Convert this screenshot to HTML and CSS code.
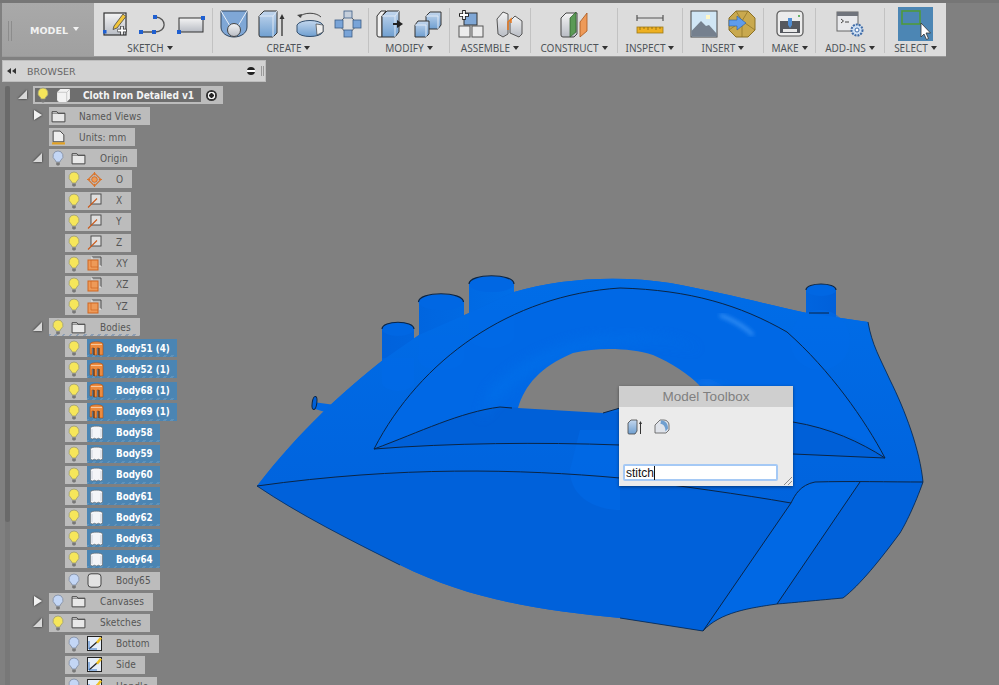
FILE: index.html
```html
<!DOCTYPE html>
<html lang="en">
<head>
<meta charset="utf-8">
<title>Cloth Iron Detailed v1</title>
<link rel="stylesheet" href="styles.css">
</head>
<body>
<svg class="defs" width="0" height="0">
  <defs>
    <linearGradient id="gBlue" x1="0" y1="0" x2="0" y2="1"><stop offset="0" stop-color="#c3d7ee"/><stop offset="1" stop-color="#6f9fd0"/></linearGradient>
    <linearGradient id="gGrey" x1="0" y1="0" x2="0" y2="1"><stop offset="0" stop-color="#f4f4f4"/><stop offset="1" stop-color="#b8bcc4"/></linearGradient>
    <linearGradient id="gCyl" x1="0" y1="0" x2="1" y2="0"><stop offset="0" stop-color="#0062dc"/><stop offset=".35" stop-color="#0070ea"/><stop offset=".6" stop-color="#0066e2"/><stop offset=".8" stop-color="#006eea"/><stop offset="1" stop-color="#0060da"/></linearGradient>
    <linearGradient id="gTop" x1="0" y1="0" x2="0" y2="1"><stop offset="0" stop-color="#006de8"/><stop offset="1" stop-color="#0063dd"/></linearGradient>
    <filter id="blur2"><feGaussianBlur stdDeviation="2"/></filter>
    <filter id="blur6"><feGaussianBlur stdDeviation="6"/></filter>
    <symbol id="bulb-on" viewBox="0 0 12 16"><path d="M6 1a5 5 0 0 0-3 9c.7.6 1 1.3 1 2h4c0-.7.3-1.400 1-2a5 5 0 0 0-3-9z" fill="#f6e65a" stroke="#9a9a78" stroke-width=".8"/><path d="M4.200 12.500h3.600v2.200l-1 .8H5.200l-1-.8z" fill="#777"/></symbol>
    <symbol id="bulb-off" viewBox="0 0 12 16"><path d="M6 1a5 5 0 0 0-3 9c.7.6 1 1.300 1 2h4c0-.7.3-1.400 1-2a5 5 0 0 0-3-9z" fill="#c3d6f5" stroke="#7f8aa0" stroke-width=".8"/><path d="M4.200 12.500h3.600v2.200l-1 .8H5.200l-1-.8z" fill="#777"/></symbol>
    <symbol id="folder" viewBox="0 0 14 12"><path d="M1 1.500h4.500l1 1.500H13v8H1z" fill="#e8e8e8" stroke="#444" stroke-width=".9"/><path d="M1 3h12" stroke="#444" stroke-width=".6"/></symbol>
    <symbol id="doc" viewBox="0 0 14 14"><path d="M2 1h6.500L12 4.500V11H2z" fill="#eee" stroke="#444" stroke-width=".9"/><path d="M1 12.500h12" stroke="#e2a020" stroke-width="2"/></symbol>
    <symbol id="comp" viewBox="0 0 14 14"><path d="M1 4l3-3h9v9l-3 3H3a2 2 0 0 1-2-2z" fill="#f2f2f2"/><path d="M1 4h9v9M10 4l3-3" fill="none" stroke="#bbb" stroke-width=".7"/></symbol>
    <symbol id="point" viewBox="0 0 14 14"><path d="M7 1l6 6-6 6-6-6z" fill="none" stroke="#d9742c" stroke-width="1"/><circle cx="7" cy="7" r="2.600" fill="#ef9c57" stroke="#c8601c" stroke-width=".7"/><path d="M7 0v3M7 11v3M0 7h3M11 7h3" stroke="#d9742c"/></symbol>
    <symbol id="axis" viewBox="0 0 15 15"><rect x="4" y="1" width="10" height="10" fill="#dedede" stroke="#444" stroke-width=".9"/><path d="M1 14.500L10 5.500" stroke="#c9591a" stroke-width="1.100"/></symbol>
    <symbol id="plane" viewBox="0 0 15 15"><path d="M5 1h9v9" fill="none" stroke="#444" stroke-width=".9"/><path d="M5 1v2M12 10h2" stroke="#eee"/><rect x="1" y="4" width="10" height="10" fill="#ee9a58" stroke="#cf6620"/><path d="M4 4v7h7" fill="none" stroke="#cf6620" stroke-width=".7"/></symbol>
    <symbol id="body-o" viewBox="0 0 15 15"><path d="M1 3c0-3 13-3 13 0v11h-4V7H8v7H5V7H3v6H1z" fill="#ed8b3e" stroke="#a84e12" stroke-width=".6"/><path d="M2 3.500h11" stroke="#f7c79c"/><path d="M10 7v7M5 7v7" stroke="#5b2a08"/></symbol>
    <symbol id="body-w" viewBox="0 0 15 15"><path d="M1.500 3c0-2.500 12-2.500 12 0v10l-2 1-2-.8-2 .8-2-.8-2 .8-2-.8z" fill="#f4f5f8" stroke="#666" stroke-width=".6"/><path d="M3 4v8M12 4v8" stroke="#cdd3dd"/></symbol>
    <symbol id="body-g" viewBox="0 0 15 15"><rect x="1" y=".8" width="13" height="13.400" rx="3" fill="#e3e3e3" stroke="#444"/></symbol>
    <symbol id="sk" viewBox="0 0 15 15"><rect x=".5" y=".5" width="14" height="14" fill="#e6eef8" stroke="#222"/><path d="M2 13L10 6" stroke="#222" stroke-width="1.200"/><path d="M2 5v8h8" fill="none" stroke="#3a78c8"/><path d="M9 6l4-5 2 1.500-4 5z" fill="#f0c020"/></symbol>
  </defs>
</svg>

<div class="app">
  <svg class="scene" width="999" height="685" viewBox="0 0 999 685">
    <path d="M382 329V400H414V329zM419 302V370H464V302zM469 284V350H514V284zM806 290V330H836V290z" fill="url(#gCyl)"/>
    <g fill="#0067e3">
      <ellipse cx="398" cy="329" rx="16" ry="7"/><ellipse cx="441" cy="302" rx="22.500" ry="8"/><ellipse cx="491.500" cy="284" rx="22.500" ry="8"/><ellipse cx="821" cy="290" rx="15" ry="6"/>
    </g>
    <path d="M313 402L357 408V422L312 408z" fill="#0068e4"/>
    <path d="M257 486C300 430 345 390 383 360L419 335L469 313L514 292C560 278 620 275 670 283C720 292 770 305 807 313L868 322C872 345 880 358 890 380C905 410 920 450 923 482C915 505 905 525 900 533C880 560 860 585 843 598C810 601 790 603 777 604C750 608 720 612 703 631L620 618C540 610 470 600 400 565C350 540 300 515 257 486Z" fill="#0066e2"/>
    <path d="M257 486C300 430 345 390 383 360L419 335L469 313L514 292C560 278 620 275 670 283C720 292 770 305 807 313L868 322C872 345 880 358 890 380C905 410 920 450 923 482C890 482 850 482 815 482C800 485 795 495 791 503C720 492 660 484 620 478C520 469 400 466 257 486Z" fill="url(#gTop)"/>
    <path d="M257 486C400 466 520 469 620 478C680 486 740 494 791 503L703 631L620 618C540 610 470 600 400 565C350 540 300 515 257 486Z" fill="#0061da"/>
    <path d="M791 503C795 495 800 485 815 482H860L777 604C750 608 720 612 703 631Z" fill="#0068e4"/>
    <path d="M860 482H923C915 505 905 525 900 533C880 560 860 585 843 598L777 604Z" fill="#0061da"/>
    <path d="M374 449C420 360 510 295 620 288C690 290 740 305 787 332C830 370 865 420 885 458C850 425 800 423 760 420C700 410 620 408 518 408C450 418 410 433 374 449Z" fill="#0068e5"/>
    <path d="M374 449C420 432 460 412 500 407L620 412C690 412 760 418 793 422C830 428 860 442 885 458C830 455 800 455 793 454L620 445C540 442 450 443 374 449Z" fill="#0060d8"/>
    <path d="M480 420C520 360 620 325 700 350C660 330 560 320 490 390z" fill="#0070ea" filter="url(#blur6)" opacity=".8"/>
    <path d="M720 315C733 320 745 327 753 335" stroke="#3b95f7" stroke-width="3" fill="none" filter="url(#blur2)"/>
    <path d="M700 385C730 400 760 420 780 440" stroke="#1a7df0" stroke-width="10" fill="none" filter="url(#blur6)"/>
    <g fill="#006ae8" opacity=".6">
      <ellipse cx="398" cy="382" rx="16" ry="9"/><ellipse cx="441" cy="358" rx="23" ry="12"/><ellipse cx="491" cy="337" rx="22.500" ry="11"/>
      <circle cx="820" cy="340" r="30"/><rect x="382" y="358" width="32" height="26"/><rect x="419" y="335" width="45" height="24"/><rect x="469" y="310" width="45" height="28"/>
      <path d="M580 430h40v80c-20 0-50-10-50-40z"/>
    </g>
    <path d="M518 408C525 385 540 367 573 353C600 347 630 348 653 355C670 362 690 375 700 386L700 420L620 408L603 413Z" fill="#808080"/>
    <g fill="none" stroke="#0b2545" stroke-width="1">
      <path d="M374 449C420 360 510 295 620 288C690 290 740 305 787 332C830 370 865 420 885 458"/>
      <path d="M374 449C420 432 460 412 500 407L512 408"/>
      <path d="M374 449C450 443 540 442 620 445L793 454L885 458"/>
      <path d="M603 413L620 408M793 422C830 428 860 442 885 458"/>
      <path d="M257 486C400 466 520 469 620 478C680 486 740 494 791 503"/>
      <path d="M791 503C795 495 800 485 815 482C850 481 890 482 923 482"/>
      <path d="M791 503L703 631M860 482L777 604"/>
      <path d="M257 486C300 515 350 540 400 565" opacity=".7"/>
      <path d="M868 322C872 345 880 358 890 380C905 410 920 450 923 482C915 505 905 525 900 533C880 560 860 585 843 598C810 601 790 603 777 604C750 608 720 612 703 631L620 618" opacity=".8"/>
      <path d="M382 329c0-9 32-9 32 0M418.500 302c0-11 45-11 45 0M469 284c0-11 45-11 45 0M806 290c0-8 30-8 30 0" stroke-width="1.200"/>
      <path d="M809 313h20"/>
      <ellipse cx="314.500" cy="403" rx="2.300" ry="6.500" fill="#0060d8" transform="rotate(8 314.500 403)"/>
    </g>
  </svg>

  <header class="toolbar">
    <div class="model">
      <span class="grip"></span>
      <span class="model-label">MODEL</span>
      <span class="caret caret-white"></span>
    </div>

    <section class="group w-sketch">
      <div class="icons">
        <svg class="ic" viewBox="0 0 28 28"><rect x="3" y="3" width="22" height="22" fill="url(#gGrey)" stroke="#333" stroke-width="1.200"/><path d="M13 16L22 4l3 2.500L16 18l-4 1.500z" fill="#f2c53a" stroke="#444" stroke-width=".8"/><rect x="2" y="20" width="3.500" height="3.500" fill="#1f5fd0"/><path d="M21 16v9M16.500 20.500h9" stroke="#333" stroke-width="3.500"/><path d="M21 16.500v8M17 20.500h8" stroke="#fff" stroke-width="1.800"/></svg>
        <svg class="ic" viewBox="0 0 28 28"><path d="M1 22h15c12 0 12-14 1-15" fill="none" stroke="#555" stroke-width="1.300"/><g fill="#1f5fd0"><rect x="0" y="20" width="4" height="4"/><rect x="13" y="20" width="4" height="4"/><rect x="14" y="5" width="4" height="4"/></g></svg>
        <svg class="ic" viewBox="0 0 28 28"><rect x="2" y="8" width="24" height="14" fill="url(#gGrey)" stroke="#333"/><rect x="0" y="20" width="4" height="4" fill="#1f5fd0"/><rect x="24" y="6" width="4" height="4" fill="#1f5fd0"/></svg>
      </div>
      <div class="label">SKETCH<span class="caret"></span></div>
    </section>
    <span class="sep"></span>

    <section class="group w-create">
      <div class="icons">
        <svg class="ic" viewBox="0 0 28 28"><path d="M1 1h26v16c0 6-6 10-13 10S1 23 1 17z" fill="#7fa7d6" stroke="#33475f"/><path d="M1 1l9 15M27 1l-9 15" stroke="#e8eff8"/><circle cx="14" cy="20" r="6.500" fill="url(#gGrey)" stroke="#444"/></svg>
        <svg class="ic" viewBox="0 0 28 28"><path d="M1 6l5-5h13v22l-4 4H3a2 2 0 0 1-2-2z" fill="url(#gBlue)" stroke="#333"/><path d="M1 6h14v21M15 6l4-5" fill="none" stroke="#dde7f4"/><path d="M24 26V7" stroke="#333" stroke-width="1.300"/><path d="M21.500 9L24 4l2.500 5z" fill="#333"/></svg>
        <svg class="ic" viewBox="0 0 28 28"><path d="M1 15c3-6 23-6 26 0v7c-3 6-23 6-26 0z" fill="url(#gBlue)" stroke="#34506f"/><path d="M20 14l7 1v7l-6 3z" fill="#eee" stroke="#444" stroke-width=".7"/><path d="M3 7C8 2 20 2 25 7" fill="none" stroke="#444"/><path d="M1 5l5-1-1 4z" fill="#444"/></svg>
        <svg class="ic" viewBox="0 0 28 28"><path d="M14 4L24 14 14 25 4 14z" fill="none" stroke="#666"/><g stroke="#3c5d86" stroke-width=".8"><rect x="10" y="1" width="8" height="7" fill="#c4cedb"/><rect x="1" y="10" width="8" height="8" fill="#79a4d8"/><rect x="19" y="10" width="8" height="8" fill="#79a4d8"/><rect x="10" y="20" width="8" height="7" fill="#79a4d8"/></g></svg>
      </div>
      <div class="label">CREATE<span class="caret"></span></div>
    </section>
    <span class="sep"></span>

    <section class="group w-modify">
      <div class="icons">
        <svg class="ic" viewBox="0 0 28 28"><path d="M1 6l4-5h5L6 6v21H3a2 2 0 0 1-2-2z" fill="#f0f0f0" stroke="#333"/><path d="M6 6l5-5h12v21l-4 5H6z" fill="url(#gBlue)" stroke="#333"/><path d="M6 6h13v21M19 6l4-5" fill="none" stroke="#dfe8f4"/><path d="M17 13h4v-3l6 4-6 4v-3h-4z" fill="#222"/></svg>
        <svg class="ic" viewBox="0 0 28 28"><path d="M12 6l4-4h11v13l-3 4H12z" fill="url(#gBlue)" stroke="#333"/><path d="M1 15l3-4h11v13l-3 3H1z" fill="url(#gBlue)" stroke="#333"/><path d="M12 6h12v13M1 15h11v12" fill="none" stroke="#e0e9f5"/></svg>
      </div>
      <div class="label">MODIFY<span class="caret"></span></div>
    </section>
    <span class="sep"></span>

    <section class="group w-assemble">
      <div class="icons">
        <svg class="ic" viewBox="0 0 28 28"><rect x="7" y="3" width="13" height="12" fill="#7fa7d6" stroke="#333"/><rect x="2" y="16" width="11" height="11" fill="#ececec" stroke="#555"/><rect x="15" y="16" width="11" height="11" fill="#ececec" stroke="#555"/><path d="M7 0v10M2 5h10" stroke="#222" stroke-width="3.600"/><path d="M7 1v8M3 5h8" stroke="#fff" stroke-width="1.800"/></svg>
        <svg class="ic" viewBox="0 0 28 28"><path d="M2 9l6-7 5 2v20l-5 3-5-3z" fill="url(#gGrey)" stroke="#555"/><path d="M15 11l5-5 7 5v13l-3 3-9-4z" fill="url(#gGrey)" stroke="#555"/><path d="M13 20v-8l3-3v4" fill="none" stroke="#e8781e" stroke-width="1.500"/></svg>
      </div>
      <div class="label">ASSEMBLE<span class="caret"></span></div>
    </section>
    <span class="sep"></span>

    <section class="group w-construct">
      <div class="icons">
        <svg class="ic" viewBox="0 0 28 28"><path d="M1 8l5-5h11v21l-3 3H3a2 2 0 0 1-2-2z" fill="url(#gGrey)" stroke="#444"/><path d="M10 8l6-6v20l-6 5z" fill="#5b9a55" stroke="#2d5c2a" stroke-width=".7"/><path d="M20 12l7-9v18l-7 6z" fill="#ee9a58" stroke="#a8561c" stroke-width=".8"/></svg>
      </div>
      <div class="label">CONSTRUCT<span class="caret"></span></div>
    </section>
    <span class="sep"></span>

    <section class="group w-inspect">
      <div class="icons">
        <svg class="ic" viewBox="0 0 28 28"><path d="M1 8h26M1 5v6M27 5v6" stroke="#555" stroke-width="1.200"/><rect x="1" y="17" width="26" height="6" fill="#eeb021" stroke="#9c7a1a" stroke-width=".8"/><path d="M4 17v3M8 17v2M12 17v3M16 17v2M20 17v3M24 17v2" stroke="#7c5d10" stroke-width=".7"/></svg>
      </div>
      <div class="label">INSPECT<span class="caret"></span></div>
    </section>
    <span class="sep"></span>

    <section class="group w-insert">
      <div class="icons">
        <svg class="ic" viewBox="0 0 28 28"><rect x="1" y="1" width="26" height="26" fill="#d0e6f5" stroke="#444"/><path d="M1.500 26.500V21L11 11l5 5 3-1 8 9v2.500z" fill="#75808e"/><rect x="16" y="5" width="4" height="4" fill="#fff8c8"/></svg>
        <svg class="ic" viewBox="0 0 28 28"><path d="M8 1h12l7 7v12l-7 7H8l-7-7V8z" fill="#c9a94e" stroke="#8a7026"/><path d="M8 1l6 10 6-10M1 20l13-9 13 9M14 11v16" fill="none" stroke="#8a7026" stroke-width=".7"/><path d="M1 10h8V6l9 7-9 7v-4H1z" fill="#5f9cec" stroke="#2a5ea6" stroke-width=".6"/></svg>
      </div>
      <div class="label">INSERT<span class="caret"></span></div>
    </section>
    <span class="sep"></span>

    <section class="group w-make">
      <div class="icons">
        <svg class="ic" viewBox="0 0 28 28"><rect x="1" y="1" width="26" height="25" rx="4" fill="#ececec" stroke="#555" stroke-width="1.200"/><rect x="4" y="11" width="20" height="12" fill="#55585e"/><path d="M7 19h14v3H7z" fill="#e8e8e8"/><path d="M12 8h4v7l-2 3-2-3z" fill="#4f8dd2"/><circle cx="23" cy="6" r="1" fill="#3ba03b"/></svg>
      </div>
      <div class="label">MAKE<span class="caret"></span></div>
    </section>
    <span class="sep"></span>

    <section class="group w-addins">
      <div class="icons">
        <svg class="ic" viewBox="0 0 28 28"><rect x="1" y="2" width="21" height="19" fill="#e8e9ec" stroke="#666"/><rect x="1" y="2" width="21" height="4" fill="#70747c"/><path d="M5 9l2.500 2L5 13M9 12h4" fill="none" stroke="#444"/><circle cx="21" cy="20" r="5.500" fill="#cfe0f4" stroke="#3f6ca8" stroke-width="2" stroke-dasharray="2 1"/><circle cx="21" cy="20" r="2" fill="#fff" stroke="#3f6ca8"/></svg>
      </div>
      <div class="label">ADD-INS<span class="caret"></span></div>
    </section>
    <span class="sep"></span>

    <section class="group w-select">
      <div class="select-btn">
        <svg class="ic-sel" viewBox="0 0 35 34"><rect x="4" y="4" width="18" height="13" fill="none" stroke="#4f9a3c" stroke-width="1.600"/><path d="M23 16v14l3-3 2.500 5.500 2-1L28 26h4.500z" fill="#fff" stroke="#333" stroke-width=".8"/></svg>
      </div>
      <div class="label">SELECT<span class="caret"></span></div>
    </section>
  </header>

  <div class="browser-bar">
    <svg class="rewind" viewBox="0 0 9 6"><path d="M4 0v6L0 3zM9 0v6L5 3z" fill="#333"/></svg>
    <span class="browser-title">BROWSER</span>
    <span class="minus"></span>
    <span class="bar-grip"></span>
  </div>

  <nav class="tree">
    <div class="row d0 open"><div class="pill root"><div class="root-inner"><svg class="bulb"><use href="#bulb-on"/></svg><svg class="ti"><use href="#comp"/></svg><span class="name">Cloth Iron Detailed v1</span></div><span class="radio"></span></div></div>
    <div class="row d1 closed"><div class="pill nobulb"><svg class="ti"><use href="#folder"/></svg><span class="name">Named Views</span></div></div>
    <div class="row d1"><div class="pill nobulb"><svg class="ti"><use href="#doc"/></svg><span class="name">Units: mm</span></div></div>
    <div class="row d1 open"><div class="pill"><svg class="bulb"><use href="#bulb-off"/></svg><svg class="ti"><use href="#folder"/></svg><span class="name">Origin</span></div></div>
    <div class="row d2"><div class="pill"><svg class="bulb"><use href="#bulb-on"/></svg><svg class="ti"><use href="#point"/></svg><span class="name">O</span></div></div>
    <div class="row d2"><div class="pill"><svg class="bulb"><use href="#bulb-on"/></svg><svg class="ti"><use href="#axis"/></svg><span class="name">X</span></div></div>
    <div class="row d2"><div class="pill"><svg class="bulb"><use href="#bulb-on"/></svg><svg class="ti"><use href="#axis"/></svg><span class="name">Y</span></div></div>
    <div class="row d2"><div class="pill"><svg class="bulb"><use href="#bulb-on"/></svg><svg class="ti"><use href="#axis"/></svg><span class="name">Z</span></div></div>
    <div class="row d2"><div class="pill"><svg class="bulb"><use href="#bulb-on"/></svg><svg class="ti"><use href="#plane"/></svg><span class="name">XY</span></div></div>
    <div class="row d2"><div class="pill"><svg class="bulb"><use href="#bulb-on"/></svg><svg class="ti"><use href="#plane"/></svg><span class="name">XZ</span></div></div>
    <div class="row d2"><div class="pill"><svg class="bulb"><use href="#bulb-on"/></svg><svg class="ti"><use href="#plane"/></svg><span class="name">YZ</span></div></div>
    <div class="row d1 open"><div class="pill hatch"><svg class="bulb"><use href="#bulb-on"/></svg><svg class="ti"><use href="#folder"/></svg><span class="name">Bodies</span></div></div>
    <div class="row d2"><div class="pill sel"><svg class="bulb"><use href="#bulb-on"/></svg><div class="sel-part"><svg class="ti"><use href="#body-o"/></svg><span class="name">Body51 (4)</span></div></div></div>
    <div class="row d2"><div class="pill sel"><svg class="bulb"><use href="#bulb-on"/></svg><div class="sel-part"><svg class="ti"><use href="#body-o"/></svg><span class="name">Body52 (1)</span></div></div></div>
    <div class="row d2"><div class="pill sel"><svg class="bulb"><use href="#bulb-on"/></svg><div class="sel-part"><svg class="ti"><use href="#body-o"/></svg><span class="name">Body68 (1)</span></div></div></div>
    <div class="row d2"><div class="pill sel"><svg class="bulb"><use href="#bulb-on"/></svg><div class="sel-part"><svg class="ti"><use href="#body-o"/></svg><span class="name">Body69 (1)</span></div></div></div>
    <div class="row d2"><div class="pill sel"><svg class="bulb"><use href="#bulb-on"/></svg><div class="sel-part"><svg class="ti"><use href="#body-w"/></svg><span class="name">Body58</span></div></div></div>
    <div class="row d2"><div class="pill sel"><svg class="bulb"><use href="#bulb-on"/></svg><div class="sel-part"><svg class="ti"><use href="#body-w"/></svg><span class="name">Body59</span></div></div></div>
    <div class="row d2"><div class="pill sel"><svg class="bulb"><use href="#bulb-on"/></svg><div class="sel-part"><svg class="ti"><use href="#body-w"/></svg><span class="name">Body60</span></div></div></div>
    <div class="row d2"><div class="pill sel"><svg class="bulb"><use href="#bulb-on"/></svg><div class="sel-part"><svg class="ti"><use href="#body-w"/></svg><span class="name">Body61</span></div></div></div>
    <div class="row d2"><div class="pill sel"><svg class="bulb"><use href="#bulb-on"/></svg><div class="sel-part"><svg class="ti"><use href="#body-w"/></svg><span class="name">Body62</span></div></div></div>
    <div class="row d2"><div class="pill sel"><svg class="bulb"><use href="#bulb-on"/></svg><div class="sel-part"><svg class="ti"><use href="#body-w"/></svg><span class="name">Body63</span></div></div></div>
    <div class="row d2"><div class="pill sel"><svg class="bulb"><use href="#bulb-on"/></svg><div class="sel-part"><svg class="ti"><use href="#body-w"/></svg><span class="name">Body64</span></div></div></div>
    <div class="row d2"><div class="pill"><svg class="bulb"><use href="#bulb-off"/></svg><svg class="ti"><use href="#body-g"/></svg><span class="name">Body65</span></div></div>
    <div class="row d1 closed"><div class="pill"><svg class="bulb"><use href="#bulb-off"/></svg><svg class="ti"><use href="#folder"/></svg><span class="name">Canvases</span></div></div>
    <div class="row d1 open"><div class="pill"><svg class="bulb"><use href="#bulb-on"/></svg><svg class="ti"><use href="#folder"/></svg><span class="name">Sketches</span></div></div>
    <div class="row d2"><div class="pill"><svg class="bulb"><use href="#bulb-off"/></svg><svg class="ti"><use href="#sk"/></svg><span class="name">Bottom</span></div></div>
    <div class="row d2"><div class="pill"><svg class="bulb"><use href="#bulb-off"/></svg><svg class="ti"><use href="#sk"/></svg><span class="name">Side</span></div></div>
    <div class="row d2"><div class="pill"><svg class="bulb"><use href="#bulb-off"/></svg><svg class="ti"><use href="#sk"/></svg><span class="name">Handle</span></div></div>
  </nav>

  <aside class="toolbox">
    <div class="toolbox-title">Model Toolbox</div>
    <div class="toolbox-icons">
      <svg class="tb-ic" viewBox="0 0 16 16"><path d="M1 4l3-3h6v11l-2 3H2a1 1 0 0 1-1-1z" fill="url(#gBlue)" stroke="#444" stroke-width=".8"/><path d="M13.500 15V4" stroke="#333"/><path d="M12 5l1.500-3L15 5z" fill="#333"/></svg>
      <svg class="tb-ic" viewBox="0 0 16 16"><path d="M1 14V6l5-5h4a5 5 0 0 1 5 5v5l-3 3z" fill="#dfe3ea" stroke="#555" stroke-width=".8"/><path d="M7 1.500c4 0 7 2.500 7 8l-2.500 3c0-5-2-7.500-5-7.500z" fill="#6f9fd0"/></svg>
    </div>
    <div class="toolbox-input"><span class="typed">stitch</span><span class="cursor"></span></div>
    <span class="resize"></span>
  </aside>
</div>
</body>
</html>
```

FILE: styles.css
```css
* { box-sizing: border-box; }
html, body { margin: 0; padding: 0; height: 100%; overflow: hidden; background: #808080; }
.defs { position: absolute; }
.app { position: relative; width: 999px; height: 685px; overflow: hidden; background: linear-gradient(#767676 0 3px, #808080 3px); font-family: "DejaVu Sans Condensed", "DejaVu Sans", sans-serif; padding-top: 3px; }
.scene { position: absolute; left: 0; top: 0; }

/* toolbar */
.toolbar { position: relative; display: flex; margin-left: 2px; width: 944px; height: 53px; background: #dcdcdc; box-shadow: 0 1px 0 #999; }
.model { width: 92px; display: flex; align-items: center; background: linear-gradient(#a9a9a9, #a0a0a0); padding-left: 6px; }
.grip { width: 4px; height: 20px; border-left: 1px solid #8c8c8c; border-right: 1px solid #8c8c8c; margin-top: 2px; }
.model-label { margin-left: 18px; color: #f2f2f2; font-family: "DejaVu Sans", sans-serif; font-size: 9.5px; font-weight: 700; margin-top: 2px; }
.group { display: flex; flex-direction: column; align-items: center; padding-top: 7px; }
.icons { display: flex; gap: 10px; height: 28px; }
.ic { width: 28px; height: 28px; display: block; }
.label { display: flex; align-items: center; margin-top: 3px; color: #4d5358; font-family: "Noto Sans", "Liberation Sans", sans-serif; font-size: 10px; line-height: 14px; }
.caret { display: inline-block; width: 0; height: 0; margin: 0 0 1px 3px; border-left: 3px solid transparent; border-right: 3px solid transparent; border-top: 4px solid #333; }
.caret-white { border-top-color: #f2f2f2; margin: 0 0 2px 5px; }
.sep { width: 1px; margin: 5px 0 3px; background: #c2c2c2; }
.w-sketch { width: 118px; }
.w-sketch .label { margin-right: 6px; }
.w-create { width: 155px; }
.w-create .label { margin-right: 4px; }
.w-modify { width: 80px; }
.w-assemble { width: 80px; }
.w-construct { width: 86px; }
.w-inspect { width: 64px; }
.w-insert { width: 80px; }
.w-make { width: 51px; }
.w-addins { width: 68px; }
.w-select { width: 61px; padding-top: 4px; }
.select-btn { width: 35px; height: 34px; background: #4c86b4; }
.ic-sel { width: 35px; height: 34px; display: block; }
.w-select .label { margin-top: 0; }

/* browser header */
.browser-bar { position: relative; display: flex; align-items: center; width: 264px; height: 22px; margin: 4px 0 0 2px; background: #d3d3d3; border: 1px solid #bdbdbd; }
.rewind { width: 9px; height: 6px; margin-left: 4px; display: block; }
.browser-title { margin-left: 11px; color: #666; font-family: "DejaVu Sans", sans-serif; font-size: 9.5px; flex: 1; }
.minus { width: 8px; height: 8px; border-radius: 50%; background: linear-gradient(#222 0 37%, #fff 37% 60%, #222 60%); margin-right: 6px; }
.bar-grip { width: 3px; height: 10px; border-left: 1px solid #999; border-right: 1px solid #999; margin-right: 1px; }

/* tree */
.tree { position: relative; margin-top: 4px; }
.tree::before { content: ""; position: absolute; left: 5px; top: 0; bottom: -200px; width: 5px; background: #787878; }
.tree::after { content: ""; position: absolute; left: 5px; top: 0; height: 436px; width: 5px; background: #696969; border-radius: 3px; }
.row { position: relative; height: 21.12px; display: flex; align-items: flex-start; }
.row.d0 { padding-left: 33px; }
.row.d1 { padding-left: 49px; }
.row.d2 { padding-left: 65px; }
.row.open::before, .row.closed::before { content: ""; position: absolute; }
.row.open::before { width: 0; height: 0; top: 4px; border-style: solid; border-width: 0 0 9px 9px; border-color: transparent transparent #d8d8d8 transparent; filter: drop-shadow(0 0 1px #222); }
.row.d0.open::before { left: 18px; }
.row.d1.open::before { left: 33px; }
.row.closed::before { left: 34px; top: 3px; width: 0; height: 0; border-style: solid; border-width: 5.500px 0 5.500px 8px; border-color: transparent transparent transparent #f2f2f2; filter: drop-shadow(0 0 1px #222); }
.pill { display: flex; align-items: center; height: 18px; min-width: 66px; padding-right: 9px; background: #bcbcbc; font-size: 10px; color: #555; }
.bulb { width: 12px; height: 16px; margin-left: 3px; flex: none; display: block; }
.ti { width: 15px; height: 15px; margin-left: 7px; flex: none; display: block; }
.name { margin-left: 14px; white-space: nowrap; letter-spacing: .1px; }
.nobulb .ti { margin-left: 2px; }
.nobulb .name { margin-left: 13px; }
.hatch { background: repeating-linear-gradient(135deg, #8c9db2 0 2px, transparent 2px 5px) bottom / 100% 2px no-repeat, #bcbcbc; }
.root { padding: 2px 0 2px 2px; width: 190px; }
.root-inner { display: flex; align-items: center; height: 14px; width: 166px; background: #6e6e6e; }
.root .name { color: #f4f4f4; font-weight: 700; margin-left: 12px; letter-spacing: 0; }
.root .bulb { margin-left: 2px; }
.radio { width: 11px; height: 11px; margin-left: 5px; border-radius: 50%; background: radial-gradient(circle, #222 0 2px, #f4f4f4 2.500px 3.500px, #333 4px); }
.sel { padding-right: 0; }
.sel-part { display: flex; align-items: center; align-self: stretch; margin-left: 7px; padding-right: 7px; background: repeating-linear-gradient(135deg, #5f93bc 0 2px, transparent 2px 5px) bottom / 100% 2px no-repeat, #4b85b3; }
.sel-part .ti { margin-left: 2px; }
.sel .name { color: #fff; font-weight: 700; letter-spacing: 0; font-size: 9.700px; margin-left: 12px; }

/* toolbox */
.toolbox { position: absolute; left: 619px; top: 386px; width: 174px; height: 100px; background: #ebebeb; box-shadow: 0 1px 3px rgba(0, 0, 0, .45); font-family: "Liberation Sans", sans-serif; }
.toolbox-title { height: 21px; background: #cfcfcf; color: #7f7f7f; font-size: 13.500px; line-height: 21px; text-align: center; }
.toolbox-icons { display: flex; gap: 11px; padding: 12px 0 0 8px; height: 57px; }
.tb-ic { width: 16px; height: 16px; display: block; }
.toolbox-input { display: flex; align-items: center; margin-left: 4px; width: 155px; height: 17px; background: #fff; border: 2px solid #a5c9f5; border-radius: 2px; padding-left: 1px; }
.typed { font-size: 12px; color: #111; }
.cursor { width: 1px; height: 14px; background: #111; }
.resize { position: absolute; right: 1px; bottom: 1px; width: 10px; height: 10px; background: repeating-linear-gradient(135deg, transparent 0 2px, #8d8d8d 2px 3px); clip-path: polygon(100% 0, 100% 100%, 0 100%); }
```
